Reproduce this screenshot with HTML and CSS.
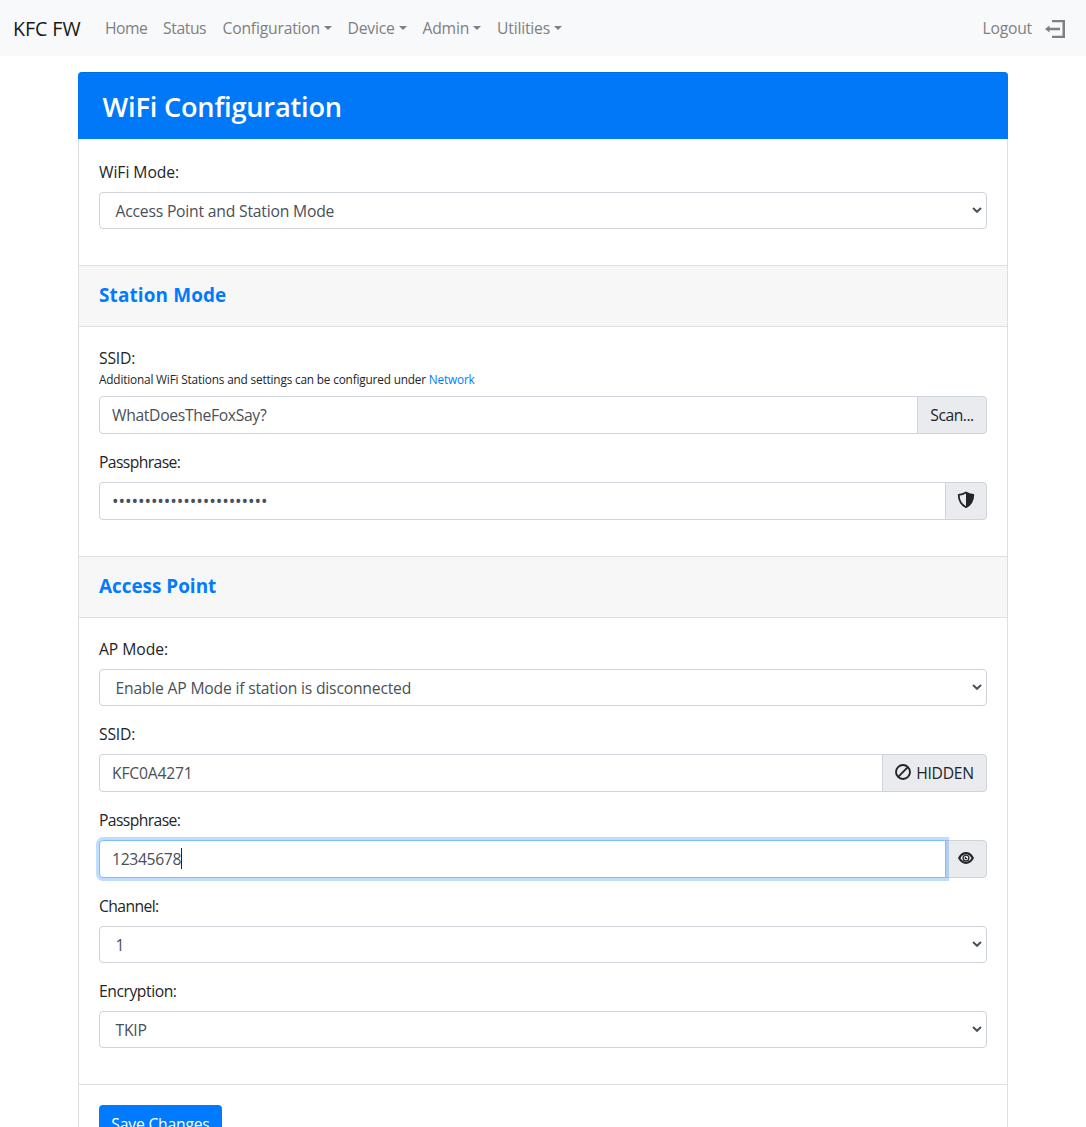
FILE: index.html
```html
<!DOCTYPE html>
<html lang="en">
<head>
<meta charset="utf-8">
<title>WiFi Configuration</title>
<link rel="stylesheet" href="styles.css">
</head>
<body>
<nav class="navbar">
  <a class="brand">KFC FW</a>
  <div class="links">
    <a class="link home">Home</a>
    <a class="link status">Status</a>
    <a class="link config drop">Configuration</a>
    <a class="link device drop">Device</a>
    <a class="link admin drop">Admin</a>
    <a class="link utilities drop">Utilities</a>
  </div>
  <a class="logout"><span>Logout</span>
    <svg width="20" height="18" viewBox="0 0 20 18"><path d="M7 0h13v18H7v-2.200h10.500V2.200H7z" fill="#7f8081"/><path d="M0 9l4.500-3.500v2.300H15v2.400H4.500v2.300z" fill="#7f8081"/></svg>
  </a>
</nav>
<main class="card">
  <h3 class="card-title">WiFi Configuration</h3>
  <section class="body">
    <div class="group">
      <label class="wide">WiFi Mode:</label>
      <div class="select"><span>Access Point and Station Mode</span><svg class="chevron" viewBox="0 0 10 6"><path d="M1 1l4 3.800L9 1"/></svg></div>
    </div>
  </section>
  <h5 class="section-title">Station Mode</h5>
  <section class="body">
    <div class="group">
      <label class="tight">SSID:</label>
      <div class="hint">Additional WiFi Stations and settings can be configured under <a>Network</a></div>
      <div class="input-group"><div class="input"><span class="network-name">WhatDoesTheFoxSay?</span></div><button class="addon scan">Scan...</button></div>
    </div>
    <div class="group">
      <label class="narrow">Passphrase:</label>
      <div class="input-group"><div class="input"><span class="dots">••••••••••••••••••••••••</span></div><button class="addon icon"><svg width="18" height="18" viewBox="0 0 18 18"><path d="M9 1.500C6.800 3 4.200 3.700 1.700 3.800C1.800 9 4 13.700 9 16.200C14 13.700 16.200 9 16.300 3.800C13.800 3.700 11.200 3 9 1.500Z" fill="none" stroke="#212529" stroke-width="1.800" stroke-linejoin="round"/><path d="M9 1.500C11.200 3 13.800 3.700 16.300 3.800C16.200 9 14 13.700 9 16.200Z" fill="#212529"/></svg></button></div>
    </div>
  </section>
  <h5 class="section-title access">Access Point</h5>
  <section class="body ap">
    <div class="group">
      <label class="wide">AP Mode:</label>
      <div class="select"><span>Enable AP Mode if station is disconnected</span><svg class="chevron" viewBox="0 0 10 6"><path d="M1 1l4 3.800L9 1"/></svg></div>
    </div>
    <div class="group">
      <label>SSID:</label>
      <div class="input-group"><div class="input"><span>KFC0A4271</span></div><button class="addon hidden"><svg width="16" height="16" viewBox="0 0 16 16"><g fill="none" stroke="#212529" stroke-width="1.900"><circle cx="8" cy="8" r="7"/><path d="M3.200 12.800L12.800 3.200"/></g></svg><span>HIDDEN</span></button></div>
    </div>
    <div class="group">
      <label class="narrow">Passphrase:</label>
      <div class="input-group"><div class="input focused"><span class="digits">12345678</span><i class="caret"></i></div><button class="addon icon eye"><svg width="16" height="12" viewBox="0 0 16 12"><path d="M1.200 6C3 2.700 5.200 1.100 8 1.100S13 2.700 14.800 6C13 9.300 10.800 10.900 8 10.900S3 9.300 1.200 6Z" fill="#e9ebee" stroke="#212529" stroke-width="2.100"/><circle cx="8" cy="6" r="2.900" fill="none" stroke="#212529" stroke-width="1.300"/><path d="M8 4.700V6h1.300A1.300 1.300 0 1 1 8 4.700Z" fill="#212529"/></svg></button></div>
    </div>
    <div class="group">
      <label class="narrow">Channel:</label>
      <div class="select"><span>1</span><svg class="chevron" viewBox="0 0 10 6"><path d="M1 1l4 3.800L9 1"/></svg></div>
    </div>
    <div class="group">
      <label class="medium">Encryption:</label>
      <div class="select"><span>TKIP</span><svg class="chevron" viewBox="0 0 10 6"><path d="M1 1l4 3.800L9 1"/></svg></div>
    </div>
  </section>
  <footer class="card-foot"><button class="save">Save Changes</button></footer>
</main>
</body>
</html>
```
FILE: styles.css
```css
* { box-sizing: border-box; }
html { overflow: hidden; }
body {
  margin: 0;
  height: 1127px;
  overflow: hidden;
  background: #fff;
  color: #212529;
  font: 15.7px/25px "Open Sans", "Noto Sans", sans-serif;
  letter-spacing: -0.2px;
}
button { font: inherit; letter-spacing: inherit; color: inherit; margin: 0; }
.navbar {
  display: flex;
  align-items: center;
  height: 56px;
  padding: 1px 21px 0 13px;
  background: #f8f9fa;
  color: #7f8081;
}
.brand { width: 92px; font-size: 19.700px; letter-spacing: -0.100px; color: #191919; white-space: nowrap; }
.links { display: flex; flex: 1; }
.link { white-space: nowrap; }
.home { width: 58px; letter-spacing: -0.500px; }
.status { width: 59.500px; letter-spacing: -0.400px; }
.config { width: 125px; }
.device { width: 75px; }
.admin { width: 74.500px; }
.drop::after {
  content: "";
  display: inline-block;
  margin-left: 4px;
  vertical-align: 4px;
  border-top: 4.500px solid;
  border-left: 4.500px solid transparent;
  border-right: 4.500px solid transparent;
}
.logout { display: flex; align-items: center; gap: 13px; }
.card {
  width: 930px;
  height: 1100px;
  margin: 16px auto 0;
  border: 1px solid #dfdfdf;
  border-top: 0;
  border-radius: 4px;
}
.card-title {
  height: 67px;
  margin: 0 -1px;
  padding: 14px 24.500px;
  border-top: 1px solid #006fe6;
  border-radius: 4px 4px 0 0;
  background: #0078f8;
  color: #fff;
  font-size: 27.200px;
  line-height: 40px;
  font-weight: 600;
}
.body { padding: 21px 20px 20px; }
.section-title + .body { padding-top: 20px; }
.section-title + .body.ap { padding-top: 19px; }
.group { margin-bottom: 16px; }
label { display: block; height: 32px; }
.wide { letter-spacing: -0.050px; }
.medium { letter-spacing: -0.450px; }
.narrow { letter-spacing: -0.600px; }
.tight { height: 24px; line-height: 23px; }
.hint {
  height: 25px;
  line-height: 17px;
  font-size: 11.800px;
  letter-spacing: -0.170px;
  white-space: nowrap;
}
.hint a { color: #007bff; }
.section-title {
  height: 62px;
  margin: 0;
  padding: 17px 20px;
  border: 1px solid #dfdfdf;
  border-width: 1px 0;
  background: #f7f7f7;
  color: #007bff;
  font-size: 18.900px;
  line-height: 25px;
  letter-spacing: 0.150px;
  font-weight: 700;
}
.access { letter-spacing: 0; }
.select, .input {
  display: flex;
  align-items: center;
  border: 1px solid #ced4da;
  border-radius: 4px;
  background: #fff;
  color: #495057;
}
.select { height: 37px; justify-content: space-between; padding: 1px 4px 0 15.500px; }
.chevron { width: 10px; height: 6px; margin-top: -2px; fill: none; stroke: #495057; stroke-width: 2; }
.input-group { display: flex; height: 38px; }
.input { flex: 1; padding: 1px 12px 0; border-radius: 4px 0 0 4px; }
.network-name, .digits { letter-spacing: -0.330px; }
.dots { font-size: 17.500px; letter-spacing: -0.100px; }
.focused {
  z-index: 1;
  border-color: #80bdff;
  box-shadow: 0 0 0 3px rgba(0, 123, 255, .25);
}
.caret { width: 1px; height: 21px; margin-top: -3px; background: #212529; }
.addon {
  display: flex;
  align-items: center;
  justify-content: center;
  margin-left: -1px;
  padding: 1px 0 0;
  border: 1px solid #ced4da;
  border-radius: 0 4px 4px 0;
  background: #e9ebee;
}
.scan { width: 70px; letter-spacing: -0.500px; }
.icon { width: 42px; padding: 0 1px 3px 0; }
.eye { padding-bottom: 2px; }
.hidden { width: 105px; gap: 5px; letter-spacing: -0.300px; }
.hidden svg { margin-top: -4px; }
.card-foot { padding: 20px; border-top: 1px solid #dfdfdf; }
.save {
  width: 123px;
  height: 38px;
  padding: 1px 0 0;
  border: 0;
  border-radius: 4px;
  background: #007bff;
  color: #fff;
}
```
